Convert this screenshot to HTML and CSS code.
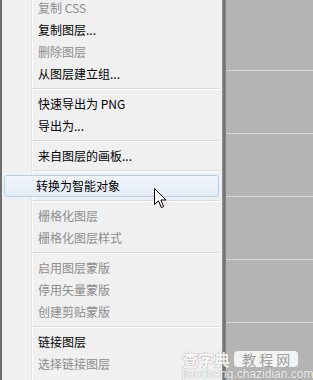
FILE: index.html
```html
<!DOCTYPE html>
<html lang="zh-CN">
<head>
    <meta charset="UTF-8">
    <title>图层菜单</title>
    <link rel="stylesheet" href="styles.css">
</head>
<body>
    <div class="screen">
        <div class="edge"></div>

        <!-- 右键菜单 -->
        <ul class="menu">
            <li class="item disabled">复制 CSS</li>
            <li class="item">复制图层...</li>
            <li class="item disabled">删除图层</li>
            <li class="item">从图层建立组...</li>
            <li class="sep"></li>
            <li class="item">快速导出为 PNG</li>
            <li class="item">导出为...</li>
            <li class="sep"></li>
            <li class="item">来自图层的画板...</li>
            <li class="sep"></li>
            <li class="item active">转换为智能对象</li>
            <li class="sep"></li>
            <li class="item disabled">栅格化图层</li>
            <li class="item disabled">栅格化图层样式</li>
            <li class="sep"></li>
            <li class="item disabled">启用图层蒙版</li>
            <li class="item disabled">停用矢量蒙版</li>
            <li class="item disabled">创建剪贴蒙版</li>
            <li class="sep"></li>
            <li class="item">链接图层</li>
            <li class="item disabled">选择链接图层</li>
        </ul>

        <div class="shadow"></div>

        <!-- 图层面板 -->
        <div class="panel">
            <div class="panel-top"><span class="label">填充:</span> <span class="value">100%</span></div>
            <div class="row first"></div>
            <div class="row"></div>
            <div class="row"></div>
            <div class="row"></div>
            <div class="row"></div>
            <div class="row last"></div>
        </div>

        <svg class="cursor" width="13" height="21" viewBox="0 0 13 21">
            <path d="M0.5 0.5 L0.5 16.5 L4.5 12.8 L7.3 19.5 L9.6 18.5 L6.9 12 L12 12 Z" fill="#fff" stroke="#000" stroke-width="1" stroke-linejoin="miter"/>
        </svg>

        <div class="watermark">
            <div class="wm-top">
                <span class="wm-logo">查字典</span>
                <span class="wm-box">教 程 网</span>
            </div>
            <div class="wm-url">jiaocheng.chazidian.com</div>
        </div>
    </div>
</body>
</html>
```

FILE: styles.css
```css
html, body {
    margin: 0;
    padding: 0;
}

body {
    font-family: "Noto Sans CJK SC", "Liberation Sans", sans-serif;
    font-size: 12px;
    color: #000;
}

.screen {
    position: relative;
    display: flex;
    width: 313px;
    height: 380px;
    overflow: hidden;
    background: #b4b4b4;
}

.edge {
    width: 2px;
    flex-shrink: 0;
    background: #6e6e6e;
}

.menu {
    list-style: none;
    margin: -3px 0 0 0;
    padding: 0;
    width: 220px;
    flex-shrink: 0;
    background: linear-gradient(to right, #f0f0f0 29px, #e2e3e3 29px, #e2e3e3 30px, #fdfdfd 30px, #fdfdfd 31px, #f0f0f0 31px);
    display: flex;
    flex-direction: column;
}

.item {
    height: 22px;
    line-height: 22px;
    padding-left: 34px;
    margin: 0 3px 0 2px;
    box-sizing: border-box;
    white-space: nowrap;
}

.item.disabled {
    color: #8d8d8d;
}

.item.active {
    padding-left: 31px;
    border: 1px solid #aecff7;
    border-radius: 3px;
    background: linear-gradient(to bottom, #f1f5fb, #e4ecf7);
    line-height: 20px;
}

.sep {
    height: 8px;
    margin: 0 2px 0 30px;
    background: linear-gradient(to bottom, transparent 3px, #dcdcdc 3px, #dcdcdc 4px, #ffffff 4px, #ffffff 5px, transparent 5px);
}

.shadow {
    width: 4px;
    flex-shrink: 0;
    background: linear-gradient(to right, #9a9a9a, #6c6c6c 50%, #8a8a8a);
}

.panel {
    flex: 1;
    display: flex;
    flex-direction: column;
    background: #b4b4b4;
}

.panel-top {
    height: 9px;
    background: #f0f0f0;
    overflow: hidden;
    padding-left: 7px;
    line-height: 12px;
    white-space: nowrap;
}

.panel-top .label,
.panel-top .value {
    position: relative;
    top: -7px;
}

.panel-top .label {
    color: #333;
}

.panel-top .value {
    color: #1c2f63;
}

.row {
    height: 62px;
    border-bottom: 1px solid #d6d6d6;
    flex-shrink: 0;
}

.row.first {
    height: 70px;
}

.row.last {
    border-bottom: none;
}

.cursor {
    position: absolute;
    left: 154px;
    top: 188px;
}

.watermark {
    position: absolute;
    left: 182px;
    top: 349px;
    color: #fff;
    opacity: 0.85;
}

.wm-top {
    display: flex;
    align-items: center;
    gap: 4px;
    height: 19px;
}

.wm-logo {
    font-size: 16px;
    font-weight: bold;
    line-height: 18px;
    text-shadow: 0 0 1px #888, 0 0 1px #888;
}

.wm-box {
    background: #fff;
    color: #9a9a9a;
    border-radius: 4px;
    font-size: 14px;
    line-height: 16px;
    padding: 0 8px;
}

.wm-url {
    font-family: "Liberation Sans", sans-serif;
    font-size: 12px;
    line-height: 12px;
    text-shadow: 0 0 1px #777;
}
```
